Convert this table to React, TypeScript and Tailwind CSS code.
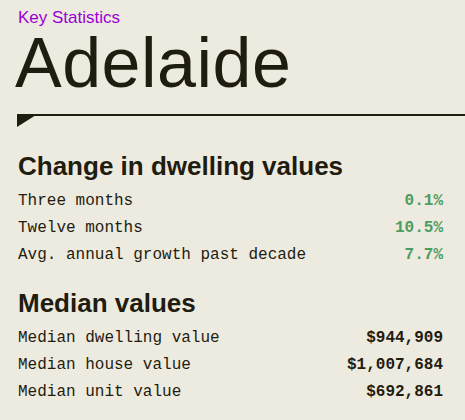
import React from "react";

const rows1 = [
  ["Three months", "0.1%"],
  ["Twelve months", "10.5%"],
  ["Avg. annual growth past decade", "7.7%"],
];
const rows2 = [
  ["Median dwelling value", "$944,909"],
  ["Median house value", "$1,007,684"],
  ["Median unit value", "$692,861"],
];

function Row({ label, value, green }: { label: string; value: string; green?: boolean }) {
  return (
    <div className="flex justify-between items-center h-[27px] pr-[22px]">
      <span className="text-[16px] text-[#1f1c10]">{label}</span>
      <span className={`text-[16px] font-bold ${green ? "text-[#4b9d62]" : "text-[#1f1c10]"}`}>{value}</span>
    </div>
  );
}

export default function App() {
  return (
    <div className="w-[465px] h-[420px] bg-[#edeadf] overflow-hidden" style={{ fontFamily: '"Liberation Sans", Arial, sans-serif' }}>
      <div className="pl-[18px] pt-[8px]">
        <div className="text-[17px] leading-[20px] text-[#9a00d6]">Key Statistics</div>
        <div className="text-[70px] leading-[70px] tracking-[0.5px] text-[#1f1c10] -ml-[3px]">Adelaide</div>
      </div>
      <div className="pl-[17px] mt-[16px]">
        <div className="h-[2px] bg-[#1f1c10]" />
        <svg width="19" height="12" viewBox="0 0 19 12" className="block -mt-[1px]">
          <polygon points="0,0 19,0 0,12" fill="#1f1c10" />
        </svg>
      </div>
      <div className="pl-[18px] mt-[24px]">
        <div className="text-[26px] leading-[30px] font-bold text-[#1f1c10]">Change in dwelling values</div>
        <div className="mt-[6px]" style={{ fontFamily: '"Liberation Mono", "DejaVu Sans Mono", monospace' }}>
          {rows1.map(([l, v]) => (
            <Row key={l} label={l} value={v} green />
          ))}
        </div>
        <div className="text-[26px] leading-[30px] font-bold text-[#1f1c10] mt-[20px]">Median values</div>
        <div className="mt-[6px]" style={{ fontFamily: '"Liberation Mono", "DejaVu Sans Mono", monospace' }}>
          {rows2.map(([l, v]) => (
            <Row key={l} label={l} value={v} />
          ))}
        </div>
      </div>
    </div>
  );
}
